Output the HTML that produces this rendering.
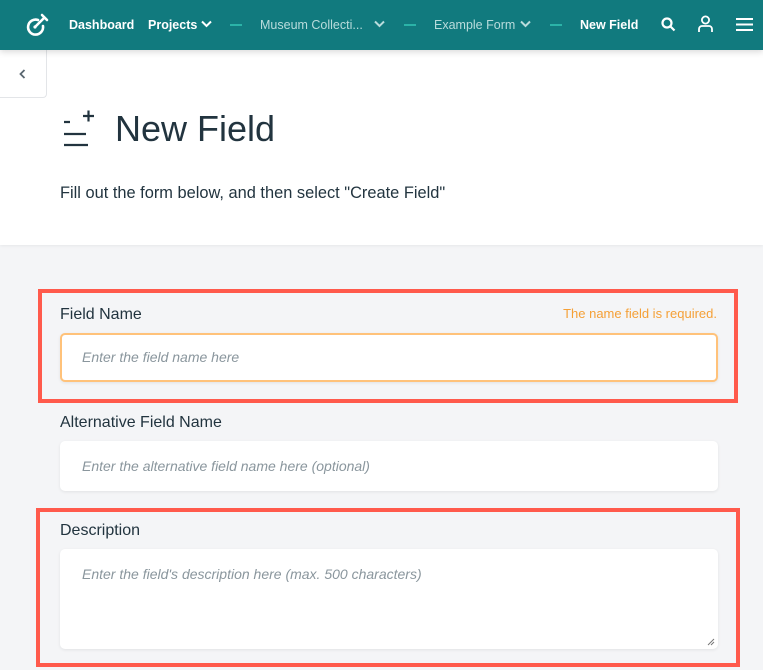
<!DOCTYPE html>
<html><head><style>
*{box-sizing:border-box;margin:0;padding:0}
body{width:763px;height:670px;overflow:hidden;background:#f4f5f7;font-family:"Liberation Sans",sans-serif;position:relative;color:#22343f}
.nav{position:absolute;left:0;top:0;width:763px;height:50px;background:#117a7e;box-shadow:0 2px 6px rgba(0,0,0,.15);z-index:2}
.nav span{position:absolute;top:18px;font-size:12.5px;white-space:nowrap}
.w{color:#fff;font-weight:bold}
.m{color:#b9dcdc}
.dash{position:absolute;top:24px;width:12px;height:2px;background:#2bb3a8}
.head{position:absolute;left:0;top:50px;width:763px;height:195px;background:#fff;box-shadow:0 1px 3px rgba(0,0,0,.06)}
.back{position:absolute;left:0;top:50px;width:47px;height:48px;border:1px solid #e3e5e8;border-left:none;border-top:none;border-radius:0 0 4px 0;background:#fff;z-index:1}
.lbl{position:absolute;left:60px;font-size:16px;color:#22343f}
.inp{position:absolute;left:60px;width:658px;background:#fff;border-radius:5px;box-shadow:0 1px 3px rgba(0,0,0,.08);font-style:italic;font-size:14px;color:#8a969d;padding-left:22px}
.red{position:absolute;border:4px solid #ff5a4c}
</style></head><body>
<div class="nav">
<svg style="position:absolute;left:24px;top:12px" width="26" height="26" viewBox="0 0 26 26" fill="none" stroke="#fff" stroke-width="2.6" stroke-linecap="round"><path d="M14 8 A7.5 7.5 0 1 0 19 14"/><circle cx="11" cy="15" r="1.6" fill="#fff" stroke="none"/><path d="M11 15 L20 6 M18 3 L23 8"/></svg>
<span class="w" style="left:69px">Dashboard</span>
<span class="w" style="left:148px">Projects</span>
<svg style="position:absolute;left:201px;top:20px" width="11" height="8" viewBox="0 0 11 8" fill="none" stroke="#fff" stroke-width="2"><path d="M1 1.5l4.5 4.5 4.5-4.5"/></svg>
<div class="dash" style="left:230px"></div>
<span class="m" style="left:260px">Museum Collecti...</span>
<svg style="position:absolute;left:374px;top:20px" width="11" height="8" viewBox="0 0 11 8" fill="none" stroke="#b9dcdc" stroke-width="2"><path d="M1 1.5l4.5 4.5 4.5-4.5"/></svg>
<div class="dash" style="left:404px"></div>
<span class="m" style="left:434px">Example Form</span>
<svg style="position:absolute;left:520px;top:20px" width="11" height="8" viewBox="0 0 11 8" fill="none" stroke="#b9dcdc" stroke-width="2"><path d="M1 1.5l4.5 4.5 4.5-4.5"/></svg>
<div class="dash" style="left:550px"></div>
<span class="w" style="left:580px">New Field</span>
<svg style="position:absolute;left:661px;top:17px" width="15" height="15" viewBox="0 0 15 15" fill="none" stroke="#fff" stroke-width="2.2"><circle cx="6" cy="6" r="4.5"/><path d="M9.5 9.5l4 4"/></svg>
<svg style="position:absolute;left:697px;top:15px" width="17" height="18" viewBox="0 0 17 18" fill="none" stroke="#fff" stroke-width="1.8"><circle cx="8.5" cy="5" r="3.6"/><path d="M2 17v-3a3 3 0 0 1 3-3h7a3 3 0 0 1 3 3v3"/></svg>
<svg style="position:absolute;left:736px;top:17px" width="17" height="15" viewBox="0 0 17 15" stroke="#fff" stroke-width="2"><path d="M0 2h17M0 7.5h17M0 13h17"/></svg>
</div>
<div class="head"></div>
<div class="back"><svg style="position:absolute;left:19px;top:19px" width="7" height="10" viewBox="0 0 7 10" fill="none" stroke="#5a6770" stroke-width="1.8"><path d="M5.5 1L1.5 5l4 4"/></svg></div>
<svg style="position:absolute;left:62px;top:108px" width="32" height="40" viewBox="0 0 32 40" fill="none" stroke="#22343f" stroke-width="2.2"><path d="M2 14h6M2 26h22M2 37h24M21 8h11M26.5 2.5v11"/></svg>
<div style="position:absolute;left:115px;top:108px;font-size:36px;color:#22343f">New Field</div>
<div style="position:absolute;left:60px;top:184px;font-size:16.4px;color:#22343f">Fill out the form below, and then select "Create Field"</div>

<div class="red" style="left:38px;top:289px;width:700px;height:114px"></div>
<div class="lbl" style="top:306px">Field Name</div>
<div style="position:absolute;right:46px;top:306px;font-size:13px;color:#f5a037">The name field is required.</div>
<div class="inp" style="top:333px;height:49px;border:2px solid #ffc27a;line-height:45px;padding-left:20px">Enter the field name here</div>

<div class="lbl" style="top:414px">Alternative Field Name</div>
<div class="inp" style="top:441px;height:50px;line-height:50px">Enter the alternative field name here (optional)</div>

<div class="red" style="left:36px;top:508px;width:704px;height:159px"></div>
<div class="lbl" style="top:522px">Description</div>
<div class="inp" style="top:549px;height:100px;padding-top:17px">Enter the field's description here (max. 500 characters)
<svg style="position:absolute;right:3px;bottom:3px" width="8" height="8" viewBox="0 0 8 8" stroke="#777" stroke-width="1"><path d="M1 7L7 1M4 7L7 4"/></svg></div>
</body></html>
